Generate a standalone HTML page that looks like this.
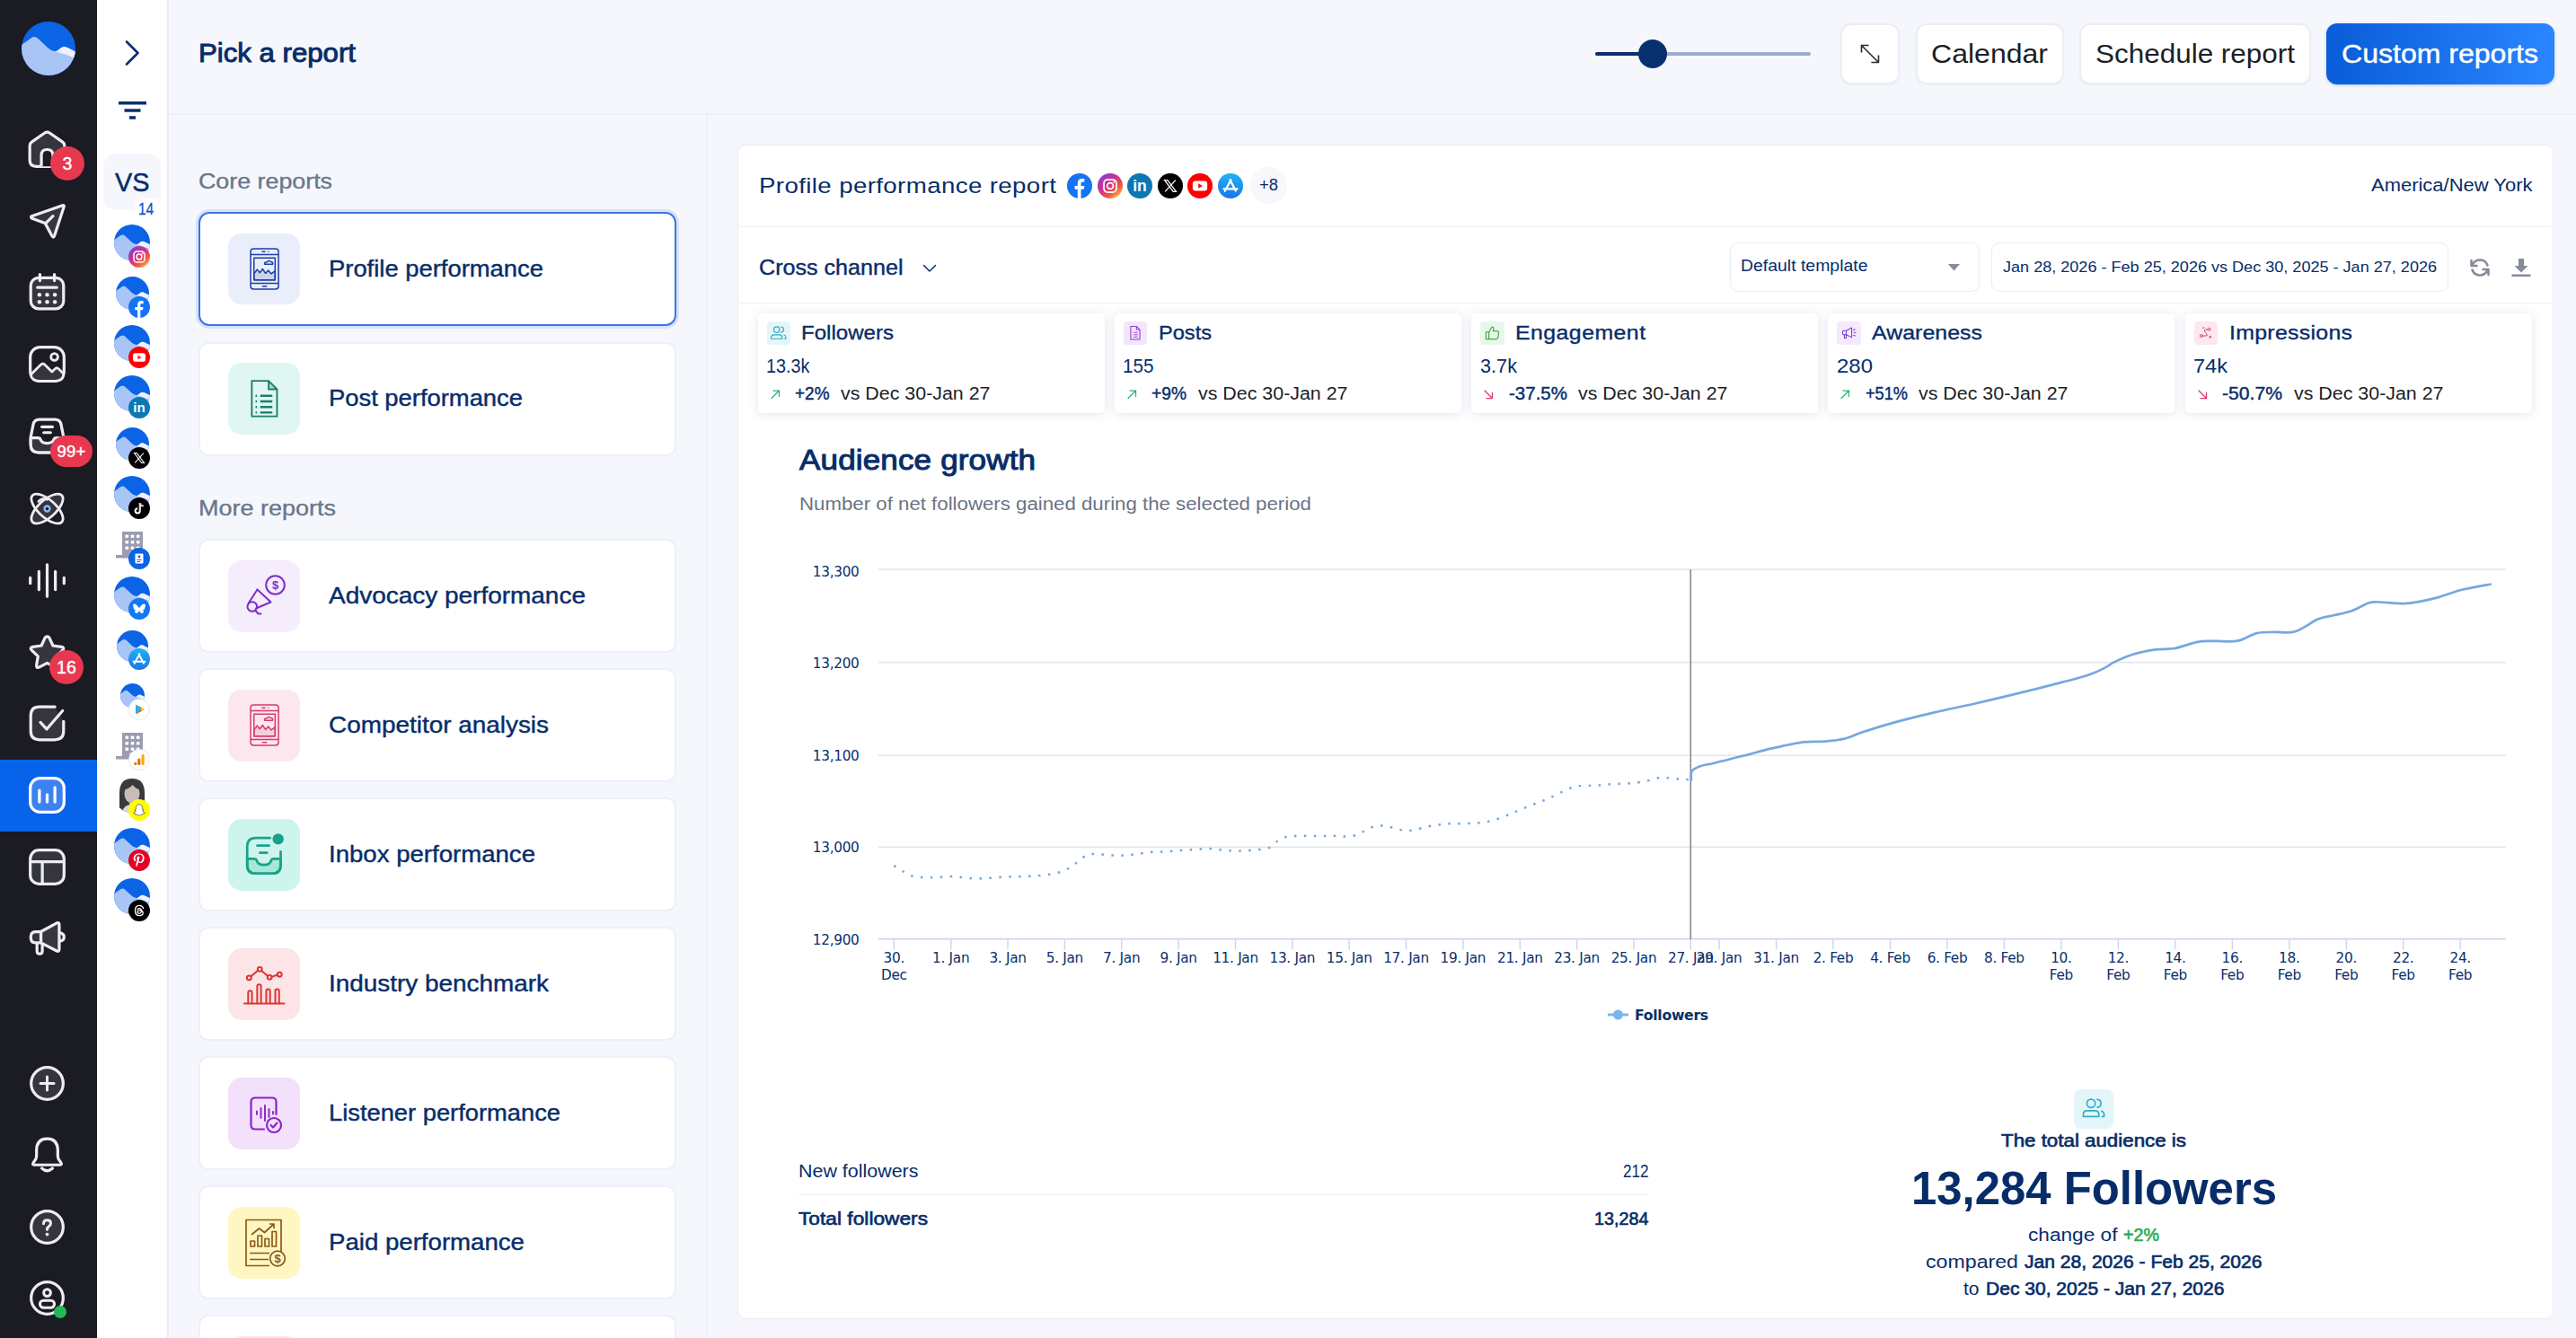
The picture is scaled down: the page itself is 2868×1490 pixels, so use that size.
<!DOCTYPE html>
<html lang="en"><head><meta charset="utf-8"><title>Reports</title><style>
*{box-sizing:border-box;margin:0;padding:0}
html,body{width:2868px;height:1490px;overflow:hidden;background:#f5f7fd;font-family:"Liberation Sans",sans-serif;}
body{position:relative}
@media (max-width:1500px){html{zoom:.5}}
.b{position:absolute;display:block}
.t{position:absolute;white-space:nowrap;display:block;transform-origin:0 50%}
</style></head>
<body>
<!-- nav -->
<div class="b" style="left:0.0px;top:0.0px;width:108.0px;height:1490.0px;background:#1a1b23"></div>
<svg class="b" style="left:24.0px;top:24.0px;" width="60" height="60" viewBox="0 0 60 60" fill="none"><clipPath id="lc0"><circle cx="30" cy="30" r="30"/></clipPath><g clip-path="url(#lc0)"><rect width="60" height="60" fill="#0b63e6"/><path d="M0 26 L10.500 18.500 Q14.500 15.500 18.500 19 L29 29 Q34 33.500 38 33 Q41 32 43.500 29.500 Q47.500 26.500 52 29.500 L60 33.500 V60 H0Z" fill="#a9c5f6"/><path d="M38 33.500 Q41 32.300 43.500 29.500 Q47.500 26.500 52 29.500 L60 33.500 V41 Q50 36.500 38 33.500Z" fill="#edf2fd"/></g></svg>
<div class="b" style="left:0.0px;top:846.0px;width:108.0px;height:80.0px;background:#0763ea"></div>
<svg class="b" style="left:30.5px;top:144.5px;" width="43" height="43" viewBox="0 0 40 40" fill="none"><path d="M2 16 Q2 13.500 4 12.200 L17.500 2.800 Q20 1.200 22.500 2.800 L36 12.200 Q38 13.500 38 16 V31 Q38 37.500 31.500 37.500 H8.500 Q2 37.500 2 31Z" fill="#34353f" stroke="#ececf1" stroke-width="3" stroke-linejoin="round"/><path d="M14 37.500 V26 Q14 20 20 20 Q26 20 26 26 V37.500" fill="#1a1b23" stroke="#ececf1" stroke-width="3"/></svg>
<svg class="b" style="left:30.5px;top:223.5px;" width="43" height="43" viewBox="0 0 40 40" fill="none"><path d="M4 15.5 L36 4.5 Q38 4 37.3 6 L27.5 36 Q26.5 38.5 25 36 L18.5 24 Q18 23 17 22.5 L4.5 18 Q2.5 16.5 4 15.5Z" fill="#34353f" stroke="#ececf1" stroke-width="3" stroke-linejoin="round"/><path d="M18.5 23 L26 15.5" stroke="#ececf1" stroke-width="3" stroke-linecap="round"/></svg>
<svg class="b" style="left:30.5px;top:303.5px;" width="43" height="43" viewBox="0 0 40 40" fill="none"><rect x="3" y="5" width="34" height="32" rx="8" fill="#34353f" stroke="#ececf1" stroke-width="3"/><path d="M12.5 1.5V8M27.5 1.5V8M10 15H30" stroke="#ececf1" stroke-width="3" stroke-linecap="round"/><g fill="#ececf1"><circle cx="12" cy="22.5" r="2.1"/><circle cx="20" cy="22.5" r="2.1"/><circle cx="28" cy="22.5" r="2.1"/><circle cx="12" cy="30" r="2.1"/><circle cx="20" cy="30" r="2.1"/><circle cx="28" cy="30" r="2.1"/></g></svg>
<svg class="b" style="left:30.5px;top:383.5px;" width="43" height="43" viewBox="0 0 40 40" fill="none"><rect x="2.5" y="2.5" width="35" height="35" rx="10" fill="#1a1b23" stroke="#ececf1" stroke-width="3"/><path d="M3 31 L13.5 20.5 Q15.5 18.5 17.5 20.5 L25 28 L28 25 Q30 23 32 25 L37 30 Q37 37.5 28 37.5 H12 Q4 37.5 3 31Z" fill="#34353f" stroke="#ececf1" stroke-width="2.6" stroke-linejoin="round"/><circle cx="27.5" cy="12.5" r="3.6" stroke="#ececf1" stroke-width="2.6"/></svg>
<svg class="b" style="left:30.5px;top:463.5px;" width="43" height="43" viewBox="0 0 40 40" fill="none"><path d="M12 3 H28 Q33.500 3 34.500 8.500 L37 21 V29 Q37 37 29 37 H11 Q3 37 3 29 V21 L5.500 8.500 Q6.500 3 12 3Z" fill="#1a1b23" stroke="#ececf1" stroke-width="3" stroke-linejoin="round"/><path d="M3 22 H10.500 Q12.500 22 13.200 24 Q14.500 27.500 20 27.500 Q25.500 27.500 26.800 24 Q27.500 22 29.500 22 H37 V29 Q37 37 29 37 H11 Q3 37 3 29Z" fill="#34353f" stroke="#ececf1" stroke-width="3" stroke-linejoin="round"/><path d="M14.500 10.500H25.500M16.500 16.500H23.500" stroke="#ececf1" stroke-width="3" stroke-linecap="round"/></svg>
<svg class="b" style="left:30.5px;top:544.5px;" width="43" height="43" viewBox="0 0 40 40" fill="none"><g stroke="#ececf1" stroke-width="2.600" fill="#34353f"><ellipse cx="20" cy="20" rx="9" ry="20.500" transform="rotate(48 20 20)"/><ellipse cx="20" cy="20" rx="9" ry="20.500" transform="rotate(-48 20 20)" fill="none"/></g><path d="M11 12.500Q15 8 20 10.500" stroke="#ececf1" stroke-width="2.400" stroke-linecap="round"/><circle cx="20" cy="20" r="2.800" fill="#1a1b23" stroke="#8fb4f5" stroke-width="2.200"/></svg>
<svg class="b" style="left:30.5px;top:624.5px;" width="43" height="43" viewBox="0 0 40 40" fill="none"><path d="M2.500 17V23M11.500 10.500V29.500M20 3.500V36.500M28.500 10.500V29.500M37.500 17V23" stroke="#ececf1" stroke-width="3" stroke-linecap="round"/></svg>
<svg class="b" style="left:30.5px;top:704.5px;" width="43" height="43" viewBox="0 0 40 40" fill="none"><path d="M20 3.500 Q21.500 3.500 22.300 5 L26 13 L34.800 14.300 Q38.500 15 36 17.800 L29.500 24 L31 33 Q31.500 36.800 28 35.200 L20 31 L12 35.200 Q8.500 36.800 9 33 L10.500 24 L4 17.800 Q1.500 15 5.200 14.300 L14 13 L17.700 5 Q18.500 3.500 20 3.500Z" fill="#34353f" stroke="#ececf1" stroke-width="3" stroke-linejoin="round"/></svg>
<svg class="b" style="left:30.5px;top:783.5px;" width="43" height="43" viewBox="0 0 40 40" fill="none"><path d="M37 18 V28 Q37 37 28 37 H12 Q3 37 3 28 V12 Q3 3 12 3 H28" fill="#34353f" stroke="#ececf1" stroke-width="3" stroke-linecap="round"/><path d="M13 19 L19.500 26 L36 7" stroke="#ececf1" stroke-width="3" stroke-linecap="round" stroke-linejoin="round"/></svg>
<svg class="b" style="left:30.5px;top:863.5px;" width="43" height="43" viewBox="0 0 40 40" fill="none"><rect x="2.500" y="2.500" width="35" height="35" rx="10" fill="#3d82f0" stroke="#ffffff" stroke-width="3"/><path d="M12 15V27M20 19.500V27M28 12V27" stroke="#fff" stroke-width="3" stroke-linecap="round"/></svg>
<svg class="b" style="left:30.5px;top:943.5px;" width="43" height="43" viewBox="0 0 40 40" fill="none"><rect x="2.500" y="2.500" width="35" height="35" rx="9" fill="#34353f" stroke="#ececf1" stroke-width="3"/><path d="M3 14.500H37M15 14.500V37" stroke="#ececf1" stroke-width="3"/></svg>
<svg class="b" style="left:30.5px;top:1022.5px;" width="43" height="43" viewBox="0 0 40 40" fill="none"><path d="M13.500 13.500 L30 4.500 Q32.500 3.500 32.500 6.500 V31.500 Q32.500 34.500 30 33.500 L13.500 25Z" fill="#34353f" stroke="#ececf1" stroke-width="3" stroke-linejoin="round"/><path d="M13.500 13.500 H8 Q3 13.500 3 19.200 Q3 25 8 25 H13.500Z" fill="#34353f" stroke="#ececf1" stroke-width="3" stroke-linejoin="round"/><path d="M9.500 25.500 V33.500 Q9.500 36.500 12.300 36.500 Q15 36.500 15 33.500 V26" stroke="#ececf1" stroke-width="3"/><path d="M33 14.500 Q37.500 15.500 37.500 19 Q37.500 22.500 33 23.500" stroke="#ececf1" stroke-width="3" stroke-linecap="round"/></svg>
<svg class="b" style="left:30.5px;top:1184.5px;" width="43" height="43" viewBox="0 0 40 40" fill="none"><circle cx="20" cy="20" r="16.600" fill="#34353f" stroke="#ececf1" stroke-width="3"/><path d="M20 13V27M13 20H27" stroke="#ececf1" stroke-width="2.800" stroke-linecap="round"/></svg>
<svg class="b" style="left:30.5px;top:1264.5px;" width="43" height="43" viewBox="0 0 40 40" fill="none"><path d="M20 3 Q31 3 31 15 V21 Q31 24 33.500 26.500 Q36.500 30 32.500 30 H7.500 Q3.500 30 6.500 26.500 Q9 24 9 21 V15 Q9 3 20 3Z" stroke="#ececf1" stroke-width="3" stroke-linejoin="round"/><path d="M14.500 33.500 Q20 38.500 25.500 33.500" stroke="#ececf1" stroke-width="3" stroke-linecap="round"/></svg>
<svg class="b" style="left:30.5px;top:1344.5px;" width="43" height="43" viewBox="0 0 40 40" fill="none"><circle cx="20" cy="20" r="16.600" fill="#34353f" stroke="#ececf1" stroke-width="3"/><path d="M16.300 16.500 Q16.300 12.800 20 12.800 Q23.700 12.800 23.700 16 Q23.700 18 21.700 19.300 Q20 20.500 20 22.500" stroke="#ececf1" stroke-width="2.800" stroke-linecap="round"/><circle cx="20" cy="27.500" r="1.800" fill="#ececf1"/></svg>
<svg class="b" style="left:30.5px;top:1423.5px;" width="43" height="43" viewBox="0 0 40 40" fill="none"><circle cx="20" cy="20" r="16.600" stroke="#ececf1" stroke-width="3"/><circle cx="20" cy="14.500" r="3.600" stroke="#ececf1" stroke-width="2.800"/><rect x="12.500" y="22.500" width="15" height="7.500" rx="3.700" stroke="#ececf1" stroke-width="2.800"/></svg>
<div class="b" style="left:56.0px;top:163.0px;width:38px;height:38px;border-radius:19px;background:#e8384f;color:#fff;font-size:19.5px;line-height:38px;text-align:center;font-weight:400;-webkit-text-stroke:.4px #fff;letter-spacing:.2px">3</div>
<div class="b" style="left:56.0px;top:485.0px;width:47px;height:35px;border-radius:19px;background:#e8384f;color:#fff;font-size:18.5px;line-height:35px;text-align:center;font-weight:400;-webkit-text-stroke:.4px #fff;letter-spacing:.2px">99+</div>
<div class="b" style="left:55.0px;top:724.0px;width:38px;height:38px;border-radius:19px;background:#e8384f;color:#fff;font-size:19.5px;line-height:38px;text-align:center;font-weight:400;-webkit-text-stroke:.4px #fff;letter-spacing:.2px">16</div>
<div class="b" style="left:60.0px;top:1454.0px;width:14.0px;height:14.0px;border-radius:50%;background:#22b85a"></div>
<!-- profiles -->
<div class="b" style="left:108.0px;top:0.0px;width:78.0px;height:1490.0px;background:#fff"></div>
<div class="b" style="left:186.0px;top:0.0px;width:1.5px;height:1490.0px;background:#e8ebf8"></div>
<div class="b" style="left:187.5px;top:0.0px;width:2.5px;height:1490.0px;background:#f9fbff"></div>
<svg class="b" style="left:138.0px;top:44.0px;" width="20" height="30" viewBox="0 0 20 30" fill="none"><path d="M3 2.500L15.500 15L3 27.500" stroke="#0a2f6b" stroke-width="2.600" stroke-linecap="round" stroke-linejoin="round"/></svg>
<svg class="b" style="left:132.0px;top:113.0px;" width="31" height="20" viewBox="0 0 31 20" fill="none"><path d="M0 1.800H31M6.500 10H24.500M12 18H19" stroke="#0a2f6b" stroke-width="3.600"/></svg>
<div class="b" style="left:115.0px;top:171.0px;width:64.0px;height:63.0px;background:#f5f7fd;border-radius:14px"></div>
<span class="t" style="left:127.8px;top:187px;font-size:29.00px;line-height:32px;color:#072d69;transform:scaleX(0.9952);-webkit-text-stroke:0.50px #072d69;">VS</span>
<div class="b" style="left:150.0px;top:221.0px;width:26.0px;height:24.0px;background:#fff;border-radius:10px 0 0 10px"></div>
<span class="t" style="left:154.0px;top:223px;font-size:18.00px;line-height:20px;color:#0b57d0;letter-spacing:-0.26px;transform:scaleX(0.8600);-webkit-text-stroke:0.30px #0b57d0;">14</span>
<svg class="b" style="left:127.0px;top:250.0px;" width="40" height="40" viewBox="0 0 60 60" fill="none"><clipPath id="lcp0"><circle cx="30" cy="30" r="30"/></clipPath><g clip-path="url(#lcp0)"><rect width="60" height="60" fill="#0b63e6"/><path d="M0 26 L10.500 18.500 Q14.500 15.500 18.500 19 L29 29 Q34 33.500 38 33 Q41 32 43.500 29.500 Q47.500 26.500 52 29.500 L60 33.500 V60 H0Z" fill="#a9c5f6"/><path d="M38 33.500 Q41 32.300 43.500 29.500 Q47.500 26.500 52 29.500 L60 33.500 V41 Q50 36.500 38 33.500Z" fill="#edf2fd"/></g></svg>
<svg class="b" style="left:143.0px;top:274.0px;" width="24" height="24" viewBox="0 0 24 24" fill="none"><defs><linearGradient id="igg" x1="0.12" y1="0.1" x2="0.85" y2="0.95"><stop offset="0" stop-color="#8a3ccb"/><stop offset=".42" stop-color="#d4308a"/><stop offset=".72" stop-color="#f0583c"/><stop offset="1" stop-color="#fdbb4c"/></linearGradient></defs><circle cx="12" cy="12" r="12" fill="url(#igg)"/><rect x="6" y="6" width="12" height="12" rx="3.600" stroke="#fff" stroke-width="1.500"/><circle cx="12" cy="12" r="2.900" stroke="#fff" stroke-width="1.500"/><circle cx="15.600" cy="8.400" r=".9" fill="#fff"/></svg>
<svg class="b" style="left:128.5px;top:308.2px;" width="37" height="37" viewBox="0 0 60 60" fill="none"><clipPath id="lcp1"><circle cx="30" cy="30" r="30"/></clipPath><g clip-path="url(#lcp1)"><rect width="60" height="60" fill="#0b63e6"/><path d="M0 26 L10.500 18.500 Q14.500 15.500 18.500 19 L29 29 Q34 33.500 38 33 Q41 32 43.500 29.500 Q47.500 26.500 52 29.500 L60 33.500 V60 H0Z" fill="#a9c5f6"/><path d="M38 33.500 Q41 32.300 43.500 29.500 Q47.500 26.500 52 29.500 L60 33.500 V41 Q50 36.500 38 33.500Z" fill="#edf2fd"/></g></svg>
<svg class="b" style="left:143.0px;top:330.0px;" width="24" height="24" viewBox="0 0 24 24" fill="none"><circle cx="12" cy="12" r="12" fill="#1474f5"/><path d="M13.300 24V15.300H16l.5-3.300h-3.200V9.900c0-1 .4-1.700 1.800-1.700h1.500V5.300c-.3 0-1.300-.2-2.400-.2-2.500 0-4.100 1.500-4.100 4.200V12H7.300v3.300h2.800V24Z" fill="#fff"/></svg>
<svg class="b" style="left:127.0px;top:362.0px;" width="40" height="40" viewBox="0 0 60 60" fill="none"><clipPath id="lcp2"><circle cx="30" cy="30" r="30"/></clipPath><g clip-path="url(#lcp2)"><rect width="60" height="60" fill="#0b63e6"/><path d="M0 26 L10.500 18.500 Q14.500 15.500 18.500 19 L29 29 Q34 33.500 38 33 Q41 32 43.500 29.500 Q47.500 26.500 52 29.500 L60 33.500 V60 H0Z" fill="#a9c5f6"/><path d="M38 33.500 Q41 32.300 43.500 29.500 Q47.500 26.500 52 29.500 L60 33.500 V41 Q50 36.500 38 33.500Z" fill="#edf2fd"/></g></svg>
<svg class="b" style="left:143.0px;top:386.0px;" width="24" height="24" viewBox="0 0 24 24" fill="none"><circle cx="12" cy="12" r="12" fill="#ff0000"/><rect x="5" y="7.300" width="14" height="9.400" rx="2.800" fill="#fff"/><path d="M10.500 9.700V14.300L14.500 12Z" fill="#ff0000"/></svg>
<svg class="b" style="left:127.0px;top:418.0px;" width="40" height="40" viewBox="0 0 60 60" fill="none"><clipPath id="lcp3"><circle cx="30" cy="30" r="30"/></clipPath><g clip-path="url(#lcp3)"><rect width="60" height="60" fill="#0b63e6"/><path d="M0 26 L10.500 18.500 Q14.500 15.500 18.500 19 L29 29 Q34 33.500 38 33 Q41 32 43.500 29.500 Q47.500 26.500 52 29.500 L60 33.500 V60 H0Z" fill="#a9c5f6"/><path d="M38 33.500 Q41 32.300 43.500 29.500 Q47.500 26.500 52 29.500 L60 33.500 V41 Q50 36.500 38 33.500Z" fill="#edf2fd"/></g></svg>
<svg class="b" style="left:143.0px;top:442.0px;" width="24" height="24" viewBox="0 0 24 24" fill="none"><circle cx="12" cy="12" r="12" fill="#0a78b5"/><text x="12" y="17" font-size="15" font-weight="700" fill="#fff" text-anchor="middle" font-family="Liberation Sans,sans-serif">in</text></svg>
<svg class="b" style="left:128.5px;top:476.2px;" width="37" height="37" viewBox="0 0 60 60" fill="none"><clipPath id="lcp4"><circle cx="30" cy="30" r="30"/></clipPath><g clip-path="url(#lcp4)"><rect width="60" height="60" fill="#0b63e6"/><path d="M0 26 L10.500 18.500 Q14.500 15.500 18.500 19 L29 29 Q34 33.500 38 33 Q41 32 43.500 29.500 Q47.500 26.500 52 29.500 L60 33.500 V60 H0Z" fill="#a9c5f6"/><path d="M38 33.500 Q41 32.300 43.500 29.500 Q47.500 26.500 52 29.500 L60 33.500 V41 Q50 36.500 38 33.500Z" fill="#edf2fd"/></g></svg>
<svg class="b" style="left:143.0px;top:498.0px;" width="24" height="24" viewBox="0 0 24 24" fill="none"><circle cx="12" cy="12" r="12" fill="#000"/><path d="M6.500 6.500H9.300L17.500 17.500H14.700Z" stroke="#fff" stroke-width="1.100"/><path d="M17 6.500L7 17.500" stroke="#fff" stroke-width="1.100"/></svg>
<svg class="b" style="left:127.0px;top:530.0px;" width="40" height="40" viewBox="0 0 60 60" fill="none"><clipPath id="lcp5"><circle cx="30" cy="30" r="30"/></clipPath><g clip-path="url(#lcp5)"><rect width="60" height="60" fill="#0b63e6"/><path d="M0 26 L10.500 18.500 Q14.500 15.500 18.500 19 L29 29 Q34 33.500 38 33 Q41 32 43.500 29.500 Q47.500 26.500 52 29.500 L60 33.500 V60 H0Z" fill="#a9c5f6"/><path d="M38 33.500 Q41 32.300 43.500 29.500 Q47.500 26.500 52 29.500 L60 33.500 V41 Q50 36.500 38 33.500Z" fill="#edf2fd"/></g></svg>
<svg class="b" style="left:143.0px;top:554.0px;" width="24" height="24" viewBox="0 0 24 24" fill="none"><circle cx="12" cy="12" r="12" fill="#000"/><path d="M12.800 6V14.800A2.600 2.600 0 1 1 10.200 12.200" stroke="#fff" stroke-width="2" /><path d="M12.800 6.300Q13.300 9.300 16.800 9.600" stroke="#fff" stroke-width="2"/><path d="M12.300 6V14.800" stroke="#25f4ee" stroke-width=".7" /><path d="M13.500 6.300Q14 9.300 17 9.900" stroke="#fe2c55" stroke-width=".7"/></svg>
<svg class="b" style="left:129.0px;top:592.0px;" width="30" height="30" viewBox="0 0 30 30" fill="none"><rect x="7" y="0" width="23" height="27.500" fill="#9b9cb1"/><rect x="0" y="26" width="30" height="3.500" fill="#9b9cb1"/><rect x="10.5" y="3.5" width="3.600" height="3.600" rx=".8" fill="#fff"/><rect x="16.7" y="3.5" width="3.600" height="3.600" rx=".8" fill="#fff"/><rect x="22.9" y="3.5" width="3.600" height="3.600" rx=".8" fill="#fff"/><rect x="10.5" y="10.0" width="3.600" height="3.600" rx=".8" fill="#fff"/><rect x="16.7" y="10.0" width="3.600" height="3.600" rx=".8" fill="#fff"/><rect x="22.9" y="10.0" width="3.600" height="3.600" rx=".8" fill="#fff"/><rect x="10.5" y="16.5" width="3.600" height="3.600" rx=".8" fill="#fff"/><rect x="16.7" y="16.5" width="3.600" height="3.600" rx=".8" fill="#fff"/><rect x="22.9" y="16.5" width="3.600" height="3.600" rx=".8" fill="#fff"/><rect x="15.500" y="22.500" width="5" height="5" fill="#fff"/></svg>
<svg class="b" style="left:143.0px;top:610.0px;" width="24" height="24" viewBox="0 0 24 24" fill="none"><circle cx="12" cy="12" r="12" fill="#0b63e6"/><rect x="7.500" y="6.500" width="9" height="11" rx="1" fill="#fff"/><circle cx="12" cy="10" r="1.400" fill="#0b63e6"/><path d="M9.500 13.500H14.500M9.500 15.500H13" stroke="#0b63e6" stroke-width="1"/></svg>
<svg class="b" style="left:127.0px;top:642.0px;" width="40" height="40" viewBox="0 0 60 60" fill="none"><clipPath id="lcp7"><circle cx="30" cy="30" r="30"/></clipPath><g clip-path="url(#lcp7)"><rect width="60" height="60" fill="#0b63e6"/><path d="M0 26 L10.500 18.500 Q14.500 15.500 18.500 19 L29 29 Q34 33.500 38 33 Q41 32 43.500 29.500 Q47.500 26.500 52 29.500 L60 33.500 V60 H0Z" fill="#a9c5f6"/><path d="M38 33.500 Q41 32.300 43.500 29.500 Q47.500 26.500 52 29.500 L60 33.500 V41 Q50 36.500 38 33.500Z" fill="#edf2fd"/></g></svg>
<svg class="b" style="left:143.0px;top:666.0px;" width="24" height="24" viewBox="0 0 24 24" fill="none"><circle cx="12" cy="12" r="12" fill="#1178f2"/><path d="M12 11.300C11 9.300 8.500 6.800 6.800 6.500 5.500 6.300 5 7 5.200 8.600c.1 1 .5 3.200 1 3.800.6.800 1.700 1 2.900.9-2 .4-2.700 1.500-1.700 2.800 1.600 2 3.300.800 4.600-2.100 1.300 2.900 3 4.100 4.600 2.100 1-1.300.3-2.400-1.700-2.800 1.200.1 2.300-.1 2.900-.9.500-.6.900-2.800 1-3.800.2-1.600-.3-2.300-1.600-2.100-1.700.3-4.200 2.800-5.200 4.800Z" fill="#fff"/></svg>
<svg class="b" style="left:129.5px;top:701.8px;" width="35" height="35" viewBox="0 0 60 60" fill="none"><clipPath id="lcp8"><circle cx="30" cy="30" r="30"/></clipPath><g clip-path="url(#lcp8)"><rect width="60" height="60" fill="#0b63e6"/><path d="M0 26 L10.500 18.500 Q14.500 15.500 18.500 19 L29 29 Q34 33.500 38 33 Q41 32 43.500 29.500 Q47.500 26.500 52 29.500 L60 33.500 V60 H0Z" fill="#a9c5f6"/><path d="M38 33.500 Q41 32.300 43.500 29.500 Q47.500 26.500 52 29.500 L60 33.500 V41 Q50 36.500 38 33.500Z" fill="#edf2fd"/></g></svg>
<svg class="b" style="left:143.0px;top:722.0px;" width="24" height="24" viewBox="0 0 24 24" fill="none"><defs><linearGradient id="asg" x1="0" y1="0" x2="0" y2="1"><stop offset="0" stop-color="#1fb3f5"/><stop offset="1" stop-color="#1a74ec"/></linearGradient></defs><circle cx="12" cy="12" r="12" fill="url(#asg)"/><path d="M12.500 6.300L7.600 15M11.500 6.300L17 16.800M5.500 14.800H18.500M7.600 15L6.600 17" stroke="#fff" stroke-width="1.900" stroke-linecap="round"/></svg>
<svg class="b" style="left:134.3px;top:760.5px;" width="27" height="27" viewBox="0 0 60 60" fill="none"><clipPath id="lcp9"><circle cx="30" cy="30" r="30"/></clipPath><g clip-path="url(#lcp9)"><rect width="60" height="60" fill="#0b63e6"/><path d="M0 26 L10.500 18.500 Q14.500 15.500 18.500 19 L29 29 Q34 33.500 38 33 Q41 32 43.500 29.500 Q47.500 26.500 52 29.500 L60 33.500 V60 H0Z" fill="#a9c5f6"/><path d="M38 33.500 Q41 32.300 43.500 29.500 Q47.500 26.500 52 29.500 L60 33.500 V41 Q50 36.500 38 33.500Z" fill="#edf2fd"/></g></svg>
<svg class="b" style="left:143.0px;top:778.0px;" width="24" height="24" viewBox="0 0 24 24" fill="none"><circle cx="12" cy="12" r="11.500" fill="#fff" stroke="#e3e6ee" stroke-width="1"/><path d="M8 6.500L13.300 12L8 17.500Z" fill="#2da8f0"/><path d="M8 6.500L15 10.300L13.300 12Z" fill="#34a853"/><path d="M8 17.500L15 13.700L13.300 12Z" fill="#ea4335"/><path d="M15 10.300L18 12L15 13.700L13.300 12Z" fill="#fbbc04"/></svg>
<svg class="b" style="left:129.0px;top:816.0px;" width="30" height="30" viewBox="0 0 30 30" fill="none"><rect x="7" y="0" width="23" height="27.500" fill="#9b9cb1"/><rect x="0" y="26" width="30" height="3.500" fill="#9b9cb1"/><rect x="10.5" y="3.5" width="3.600" height="3.600" rx=".8" fill="#fff"/><rect x="16.7" y="3.5" width="3.600" height="3.600" rx=".8" fill="#fff"/><rect x="22.9" y="3.5" width="3.600" height="3.600" rx=".8" fill="#fff"/><rect x="10.5" y="10.0" width="3.600" height="3.600" rx=".8" fill="#fff"/><rect x="16.7" y="10.0" width="3.600" height="3.600" rx=".8" fill="#fff"/><rect x="22.9" y="10.0" width="3.600" height="3.600" rx=".8" fill="#fff"/><rect x="10.5" y="16.5" width="3.600" height="3.600" rx=".8" fill="#fff"/><rect x="16.7" y="16.5" width="3.600" height="3.600" rx=".8" fill="#fff"/><rect x="22.9" y="16.5" width="3.600" height="3.600" rx=".8" fill="#fff"/><rect x="15.500" y="22.500" width="5" height="5" fill="#fff"/></svg>
<svg class="b" style="left:143.0px;top:834.0px;" width="24" height="24" viewBox="0 0 24 24" fill="none"><circle cx="12" cy="12" r="11.500" fill="#fff" stroke="#e3e6ee" stroke-width="1"/><rect x="14.500" y="6" width="3.200" height="12" rx="1.600" fill="#f9ab00"/><rect x="10.200" y="10.500" width="3.200" height="7.500" rx="1.600" fill="#e37400"/><circle cx="7.800" cy="16.400" r="1.600" fill="#e37400"/></svg>
<svg class="b" style="left:127.0px;top:865.0px;" width="40" height="40" viewBox="0 0 40 40" fill="none"><clipPath id="wc"><circle cx="20" cy="20" r="20"/></clipPath><g clip-path="url(#wc)"><rect width="40" height="40" fill="#fff"/><path d="M6 40V18Q6 2 20 2Q34 2 34 18V40Z" fill="#3a3a3c"/><ellipse cx="20" cy="19" rx="8.500" ry="10.500" fill="#c9bcb7"/><path d="M10 15Q12 6 20 6Q29 6 30.500 15Q24 13.500 20.500 9Q17 13.500 10 15Z" fill="#3a3a3c"/><path d="M9 40Q10 31 20 31Q30 31 31 40Z" fill="#d8d8d8"/><rect x="17" y="27" width="6" height="6" fill="#bfb2ad"/></g></svg>
<svg class="b" style="left:143.0px;top:890.0px;" width="24" height="24" viewBox="0 0 24 24" fill="none"><circle cx="12" cy="12" r="12" fill="#fffc00"/><path d="M12 5.800c2.300 0 3.600 1.700 3.600 3.700v1.600l1.300.5-.1.700-1.100.5c.4 1.200 1.300 2 2.500 2.400l-.2.700-1.500.3-.3.800-1.500-.1c-.8.600-1.500 1.300-2.700 1.300s-1.900-.7-2.700-1.300l-1.500.1-.3-.8-1.500-.3-.2-.7c1.200-.4 2.100-1.200 2.500-2.400l-1.100-.5-.1-.7 1.300-.5V9.500c0-2 1.300-3.700 3.600-3.700Z" fill="#fff" stroke="#222" stroke-width=".6"/></svg>
<svg class="b" style="left:127.0px;top:922.0px;" width="40" height="40" viewBox="0 0 60 60" fill="none"><clipPath id="lcp12"><circle cx="30" cy="30" r="30"/></clipPath><g clip-path="url(#lcp12)"><rect width="60" height="60" fill="#0b63e6"/><path d="M0 26 L10.500 18.500 Q14.500 15.500 18.500 19 L29 29 Q34 33.500 38 33 Q41 32 43.500 29.500 Q47.500 26.500 52 29.500 L60 33.500 V60 H0Z" fill="#a9c5f6"/><path d="M38 33.500 Q41 32.300 43.500 29.500 Q47.500 26.500 52 29.500 L60 33.500 V41 Q50 36.500 38 33.500Z" fill="#edf2fd"/></g></svg>
<svg class="b" style="left:143.0px;top:946.0px;" width="24" height="24" viewBox="0 0 24 24" fill="none"><circle cx="12" cy="12" r="12" fill="#e60023"/><path transform="translate(-1.8 -1.8) scale(1.15)" d="M12.200 5.200c-3.800 0-5.700 2.700-5.700 4.900 0 1.400.5 2.600 1.600 3 .2.100.3 0 .4-.2l.2-.6c0-.2 0-.300-.1-.5-.3-.4-.5-.9-.5-1.600 0-2 1.500-3.800 3.900-3.800 2.100 0 3.300 1.300 3.300 3 0 2.300-1 4.200-2.500 4.200-.8 0-1.400-.7-1.200-1.500.2-1 .7-2.100.7-2.800 0-.6-.3-1.200-1.100-1.200-.8 0-1.500.9-1.500 2 0 .7.300 1.200.3 1.200l-1 4.200c-.3 1.200 0 2.800 0 2.900 0 .1.100.1.200 0 .1-.1 1-1.300 1.400-2.500l.5-2.100c.3.500 1 .9 1.800.9 2.400 0 4-2.200 4-5.100 0-2.200-1.900-4.200-4.700-4.200Z" fill="#fff"/></svg>
<svg class="b" style="left:127.0px;top:978.0px;" width="40" height="40" viewBox="0 0 60 60" fill="none"><clipPath id="lcp13"><circle cx="30" cy="30" r="30"/></clipPath><g clip-path="url(#lcp13)"><rect width="60" height="60" fill="#0b63e6"/><path d="M0 26 L10.500 18.500 Q14.500 15.500 18.500 19 L29 29 Q34 33.500 38 33 Q41 32 43.500 29.500 Q47.500 26.500 52 29.500 L60 33.500 V60 H0Z" fill="#a9c5f6"/><path d="M38 33.500 Q41 32.300 43.500 29.500 Q47.500 26.500 52 29.500 L60 33.500 V41 Q50 36.500 38 33.500Z" fill="#edf2fd"/></g></svg>
<svg class="b" style="left:143.0px;top:1002.0px;" width="24" height="24" viewBox="0 0 24 24" fill="none"><circle cx="12" cy="12" r="12" fill="#000"/><path d="M16.500 9.500C16 7.500 14.500 6.300 12.200 6.300 9.300 6.300 7.500 8.400 7.500 12s1.800 5.700 4.700 5.700c2.400 0 4-1.300 4-3.100 0-1.800-1.500-2.800-3.600-2.800-1.600 0-2.600.7-2.600 1.800 0 1 .8 1.600 1.900 1.600 1.600 0 2.600-1.100 2.500-3.200-.1-1.500-.9-2.400-2.400-2.400-.9 0-1.600.4-2 1" stroke="#fff" stroke-width="1.300" stroke-linecap="round" fill="none"/></svg>
<!-- topbar -->
<div class="b" style="left:188.0px;top:126.0px;width:2680.0px;height:2.0px;background:#eef1fb"></div>
<span class="t" style="left:220.5px;top:43px;font-size:29.00px;line-height:32px;color:#072d69;transform:scaleX(1.0750);-webkit-text-stroke:0.93px #072d69;">Pick a report</span>
<div class="b" style="left:1776.0px;top:57.5px;width:240.0px;height:4.0px;background:#9eabcf;border-radius:2px"></div>
<div class="b" style="left:1776.0px;top:57.5px;width:64.0px;height:4.0px;background:#08306e;border-radius:2px"></div>
<div class="b" style="left:1824.0px;top:43.5px;width:32.0px;height:32.0px;background:#08306e;border-radius:50%"></div>
<div class="b" style="left:2049.0px;top:26.0px;width:66.0px;height:68.0px;background:#fff;border:2px solid #ebeef6;border-radius:12px;box-shadow:0 1px 2px rgba(60,80,140,.05)"></div>
<svg class="b" style="left:2070.0px;top:48.0px;" width="24" height="24" viewBox="0 0 24 24" fill="none"><path d="M2.500 2.500L21.500 21.500M2.500 10V2.500H10M21.500 14V21.500H14" stroke="#2a2d36" stroke-width="1.600" stroke-linecap="round" stroke-linejoin="round"/></svg>
<div class="b" style="left:2133.0px;top:26.0px;width:165.0px;height:68.0px;background:#fff;border:2px solid #ebeef6;border-radius:12px;box-shadow:0 1px 2px rgba(60,80,140,.05)"></div><span class="t" style="left:2150.0px;top:43px;font-size:29.50px;line-height:33px;color:#1c1e26;transform:scaleX(1.0859);">Calendar</span>
<div class="b" style="left:2315.0px;top:26.0px;width:258.0px;height:68.0px;background:#fff;border:2px solid #ebeef6;border-radius:12px;box-shadow:0 1px 2px rgba(60,80,140,.05)"></div><span class="t" style="left:2333.0px;top:43px;font-size:29.50px;line-height:33px;color:#1c1e26;transform:scaleX(1.0659);">Schedule report</span>
<div class="b" style="left:2590.0px;top:26.0px;width:254.0px;height:68.0px;background:linear-gradient(90deg,#0a5cd8,#2a86ff);border-radius:12px;box-shadow:0 1px 3px rgba(10,80,200,.3)"></div><span class="t" style="left:2607.0px;top:43px;font-size:29.50px;line-height:33px;color:#fff;transform:scaleX(1.0861);-webkit-text-stroke:0.45px #fff;">Custom reports</span>
<!-- reports -->
<div class="b" style="left:786.0px;top:128.0px;width:2.0px;height:1362.0px;background:#eef1fb"></div>
<span class="t" style="left:220.5px;top:188px;font-size:24.50px;line-height:27px;color:#6a768a;transform:scaleX(1.0943);-webkit-text-stroke:0.35px #6a768a;">Core reports</span>
<div class="b" style="left:221.0px;top:236.0px;width:532.0px;height:127.0px;background:#fff;border:2.500px solid #3b76e3;border-radius:12px;box-shadow:0 0 0 3px #d6e2fb"></div><div class="b" style="left:254.3px;top:259.7px;width:79.5px;height:79.5px;background:#eaeefb;border-radius:15px"></div><svg class="b" style="left:270.5px;top:276.0px;overflow:visible" width="47.08" height="47.08" viewBox="0 0 44 44" fill="none"><g stroke="#1d3fa8" stroke-width="1.400" fill="none" stroke-linejoin="round"><rect x="7.500" y="1" width="29" height="42" rx="3"/><path d="M7.500 7H36.500M7.500 37H36.500M19 4H23M25.500 4H26.500M19.500 40H24.500"/><rect x="11" y="10.500" width="22" height="23"/><path d="M11 27L14.500 22.500L17 26L20 22L23 26.500L26 23.500L29 27L33 24V33.500H11Z" fill="#1d3fa8" fill-opacity=".15"/><path d="M22 16.500Q22 14.500 24.500 15Q26 12.500 28.500 14.500Q31 14.500 30.500 17H22.500Q22 17 22 16.500Z"/></g></svg><span class="t" style="left:366.0px;top:285px;font-size:25.30px;line-height:28px;color:#072d69;transform:scaleX(1.0825);-webkit-text-stroke:0.40px #072d69;">Profile performance</span>
<div class="b" style="left:221.0px;top:380.5px;width:532.0px;height:127.0px;background:#fff;border:2px solid #ecf0fa;border-radius:11px"></div><div class="b" style="left:254.3px;top:404.2px;width:79.5px;height:79.5px;background:#dff6f2;border-radius:15px"></div><svg class="b" style="left:271.1px;top:421.1px;overflow:visible" width="45.76" height="45.76" viewBox="0 0 44 44" fill="none"><g stroke="#1c7d6c" stroke-width="1.800" fill="none" stroke-linejoin="round"><path d="M9 3H27L36 12V41H9Z"/><path d="M27 3V12H36" fill="#1c7d6c" fill-opacity=".25"/><path d="M18 19H31M18 25H31M18 31H31M18 37H31" stroke-width="2.200"/><path d="M13 19H14.500M13 25H14.500M13 31H14.500M13 37H14.500" stroke-width="2.200"/></g></svg><span class="t" style="left:366.0px;top:429px;font-size:25.30px;line-height:28px;color:#072d69;transform:scaleX(1.0817);-webkit-text-stroke:0.40px #072d69;">Post performance</span>
<span class="t" style="left:220.5px;top:552px;font-size:24.50px;line-height:27px;color:#6a768a;transform:scaleX(1.1016);-webkit-text-stroke:0.35px #6a768a;">More reports</span>
<div class="b" style="left:221.0px;top:600.3px;width:532.0px;height:127.0px;background:#fff;border:2px solid #ecf0fa;border-radius:11px"></div><div class="b" style="left:254.3px;top:624.0px;width:79.5px;height:79.5px;background:#f5ecfc;border-radius:15px"></div><svg class="b" style="left:272.0px;top:641.8px;overflow:visible" width="44" height="44" viewBox="0 0 44 44" fill="none"><g stroke="#7b2fc9" stroke-width="2" fill="none" stroke-linejoin="round" stroke-linecap="round"><circle cx="34.500" cy="9.500" r="10.300"/><path d="M14.500 14.500L29.500 28.500L13 35.500"/><path d="M14.500 14.500L4.800 29.500"/><circle cx="8.800" cy="33.500" r="5.300"/><path d="M13 38.500L15.500 41.500H18.500"/></g><text x="34.500" y="14.300" font-size="13" font-weight="700" fill="#7b2fc9" text-anchor="middle" font-family="Liberation Sans,sans-serif">$</text></svg><span class="t" style="left:366.0px;top:649px;font-size:25.30px;line-height:28px;color:#072d69;transform:scaleX(1.1053);-webkit-text-stroke:0.40px #072d69;">Advocacy performance</span>
<div class="b" style="left:221.0px;top:744.3px;width:532.0px;height:127.0px;background:#fff;border:2px solid #ecf0fa;border-radius:11px"></div><div class="b" style="left:254.3px;top:768.0px;width:79.5px;height:79.5px;background:#fde7ef;border-radius:15px"></div><svg class="b" style="left:270.5px;top:784.3px;overflow:visible" width="47.08" height="47.08" viewBox="0 0 44 44" fill="none"><g stroke="#d63a6a" stroke-width="1.400" fill="none" stroke-linejoin="round"><rect x="7.500" y="1" width="29" height="42" rx="3"/><path d="M7.500 7H36.500M7.500 37H36.500M19 4H23M25.500 4H26.500M19.500 40H24.500"/><rect x="11" y="10.500" width="22" height="23"/><path d="M11 27L14.500 22.500L17 26L20 22L23 26.500L26 23.500L29 27L33 24V33.500H11Z" fill="#d63a6a" fill-opacity=".15"/><path d="M22 16.500Q22 14.500 24.500 15Q26 12.500 28.500 14.500Q31 14.500 30.500 17H22.500Q22 17 22 16.500Z"/></g></svg><span class="t" style="left:366.0px;top:793px;font-size:25.30px;line-height:28px;color:#072d69;transform:scaleX(1.1028);-webkit-text-stroke:0.40px #072d69;">Competitor analysis</span>
<div class="b" style="left:221.0px;top:888.3px;width:532.0px;height:127.0px;background:#fff;border:2px solid #ecf0fa;border-radius:11px"></div><div class="b" style="left:254.3px;top:912.0px;width:79.5px;height:79.5px;background:#cdf5ee;border-radius:15px"></div><svg class="b" style="left:269.1px;top:926.9px;overflow:visible" width="49.72" height="49.72" viewBox="0 0 44 44" fill="none"><g stroke="#1aa389" stroke-width="2.400" fill="none" stroke-linecap="round" stroke-linejoin="round"><path d="M28 5.500H14Q5.500 5.500 5.500 14V32Q5.500 40.500 14 40.500H30Q38.500 40.500 38.500 32V19"/><path d="M5.500 26H12.500Q14.500 26 15 28Q16 32 22 32Q28 32 29 28Q29.500 26 31.500 26H38.500V32Q38.500 40.500 30 40.500H14Q5.500 40.500 5.500 32Z" fill="#1aa389" fill-opacity=".2"/><path d="M15.500 13H27M18 20H25"/></g><circle cx="36" cy="6.500" r="5.500" fill="#1aa389"/></svg><span class="t" style="left:366.0px;top:937px;font-size:25.30px;line-height:28px;color:#072d69;transform:scaleX(1.0903);-webkit-text-stroke:0.40px #072d69;">Inbox performance</span>
<div class="b" style="left:221.0px;top:1032.3px;width:532.0px;height:127.0px;background:#fff;border:2px solid #ecf0fa;border-radius:11px"></div><div class="b" style="left:254.3px;top:1056.0px;width:79.5px;height:79.5px;background:#fde5e7;border-radius:15px"></div><svg class="b" style="left:270.7px;top:1072.5px;overflow:visible" width="46.64" height="46.64" viewBox="0 0 44 44" fill="none"><g stroke="#d93636" stroke-width="1.900" fill="none" stroke-linejoin="round" stroke-linecap="round"><path d="M1 42H43"/><path d="M5 42V30.500Q5 28.500 7 28.500Q9 28.500 9 30.500V42M14.500 42V24Q14.500 22 16.500 22Q18.500 22 18.500 24V42M24 42V29Q24 27 26 27Q28 27 28 29V42M33.500 42V29Q33.500 27 35.500 27Q37.500 27 37.500 29V42"/><path d="M8 13.500L15 7.500M19.500 8L25.500 13M29.500 14L35.500 12"/><circle cx="6" cy="15" r="2.300"/><circle cx="17.200" cy="6" r="2.300"/><circle cx="27.500" cy="14.500" r="2.300"/><circle cx="38" cy="11.500" r="2.300"/></g></svg><span class="t" style="left:366.0px;top:1081px;font-size:25.30px;line-height:28px;color:#072d69;transform:scaleX(1.1027);-webkit-text-stroke:0.40px #072d69;">Industry benchmark</span>
<div class="b" style="left:221.0px;top:1176.3px;width:532.0px;height:127.0px;background:#fff;border:2px solid #ecf0fa;border-radius:11px"></div><div class="b" style="left:254.3px;top:1200.0px;width:79.5px;height:79.5px;background:#f3e0fb;border-radius:15px"></div><svg class="b" style="left:272.0px;top:1217.8px;overflow:visible" width="44" height="44" viewBox="0 0 44 44" fill="none"><g stroke="#8a24c9" stroke-width="2.200" fill="none" stroke-linecap="round" stroke-linejoin="round"><path d="M22 39.500H12Q7.500 39.500 7.500 35V9Q7.500 4.500 12 4.500H31Q35.500 4.500 35.500 9V23"/><path d="M14 19.500V23M18.500 16V27M23 13V30M27.500 17V26M32 20V22.500" stroke-width="1.900"/><circle cx="33" cy="35" r="8"/><path d="M29.500 35L32 37.500L36.500 32.500"/></g></svg><span class="t" style="left:366.0px;top:1225px;font-size:25.30px;line-height:28px;color:#072d69;transform:scaleX(1.0792);-webkit-text-stroke:0.40px #072d69;">Listener performance</span>
<div class="b" style="left:221.0px;top:1320.3px;width:532.0px;height:127.0px;background:#fff;border:2px solid #ecf0fa;border-radius:11px"></div><div class="b" style="left:254.3px;top:1344.0px;width:79.5px;height:79.5px;background:#fff6c2;border-radius:15px"></div><svg class="b" style="left:272.0px;top:1361.8px;overflow:visible" width="44" height="44" viewBox="0 0 44 44" fill="none"><g stroke="#8a5a16" stroke-width="1.700" fill="none" stroke-linejoin="round"><path d="M28 47.500H2V-3.500H41V32"/><path d="M7 26V20H11.500V26ZM15 26V14H19.500V26ZM23 26V17.500H27.500V26ZM31 26V9.500H35.500V26Z"/><path d="M8 13L16.500 6L22.500 10.500L33 1M28 1H33V6"/><path d="M6 33.500H28M6 40.500H27"/><circle cx="37" cy="39.500" r="8.300"/></g><text x="37" y="44.300" font-size="13" font-weight="700" fill="#8a5a16" text-anchor="middle" font-family="Liberation Sans,sans-serif">$</text></svg><span class="t" style="left:366.0px;top:1369px;font-size:25.30px;line-height:28px;color:#072d69;transform:scaleX(1.0916);-webkit-text-stroke:0.40px #072d69;">Paid performance</span>
<div class="b" style="left:221.0px;top:1464.3px;width:532.0px;height:127.0px;background:#fff;border:2px solid #ecf0fa;border-radius:11px"></div><div class="b" style="left:254.3px;top:1488.0px;width:79.5px;height:79.5px;background:#fde8e0;border-radius:15px"></div>
<!-- mainp -->
<div class="b" style="left:820.5px;top:160.5px;width:2022.8px;height:1308.3px;background:#fff;border:1.300px solid #e8ecf7;border-radius:9px"></div>
<span class="t" style="left:845.0px;top:193px;font-size:24.50px;line-height:27px;color:#072d69;letter-spacing:0.33px;transform:scaleX(1.1300);">Profile performance report</span>
<svg class="b" style="left:1187.8px;top:192.8px;" width="28" height="28" viewBox="0 0 24 24" fill="none"><circle cx="12" cy="12" r="12" fill="#1474f5"/><path d="M13.300 24V15.300H16l.5-3.300h-3.200V9.900c0-1 .4-1.700 1.800-1.700h1.500V5.300c-.3 0-1.300-.2-2.400-.2-2.500 0-4.100 1.500-4.100 4.200V12H7.300v3.300h2.800V24Z" fill="#fff"/></svg>
<svg class="b" style="left:1221.5px;top:192.8px;" width="28" height="28" viewBox="0 0 24 24" fill="none"><defs><linearGradient id="igg2" x1="0.12" y1="0.1" x2="0.85" y2="0.95"><stop offset="0" stop-color="#8a3ccb"/><stop offset=".42" stop-color="#d4308a"/><stop offset=".72" stop-color="#f0583c"/><stop offset="1" stop-color="#fdbb4c"/></linearGradient></defs><circle cx="12" cy="12" r="12" fill="url(#igg2)"/><rect x="6" y="6" width="12" height="12" rx="3.600" stroke="#fff" stroke-width="1.500"/><circle cx="12" cy="12" r="2.900" stroke="#fff" stroke-width="1.500"/><circle cx="15.600" cy="8.400" r=".9" fill="#fff"/></svg>
<svg class="b" style="left:1255.1px;top:192.8px;" width="28" height="28" viewBox="0 0 24 24" fill="none"><circle cx="12" cy="12" r="12" fill="#0a78b5"/><text x="12" y="17" font-size="15" font-weight="700" fill="#fff" text-anchor="middle" font-family="Liberation Sans,sans-serif">in</text></svg>
<svg class="b" style="left:1288.8px;top:192.8px;" width="28" height="28" viewBox="0 0 24 24" fill="none"><circle cx="12" cy="12" r="12" fill="#000"/><path d="M6.500 6.500H9.300L17.500 17.500H14.700Z" stroke="#fff" stroke-width="1.100"/><path d="M17 6.500L7 17.500" stroke="#fff" stroke-width="1.100"/></svg>
<svg class="b" style="left:1322.4px;top:192.8px;" width="28" height="28" viewBox="0 0 24 24" fill="none"><circle cx="12" cy="12" r="12" fill="#ff0000"/><rect x="5" y="7.300" width="14" height="9.400" rx="2.800" fill="#fff"/><path d="M10.500 9.700V14.300L14.500 12Z" fill="#ff0000"/></svg>
<svg class="b" style="left:1356.0px;top:192.8px;" width="28" height="28" viewBox="0 0 24 24" fill="none"><defs><linearGradient id="asg2" x1="0" y1="0" x2="0" y2="1"><stop offset="0" stop-color="#1fb3f5"/><stop offset="1" stop-color="#1a74ec"/></linearGradient></defs><circle cx="12" cy="12" r="12" fill="url(#asg2)"/><path d="M12.500 6.300L7.600 15M11.500 6.300L17 16.800M5.500 14.800H18.500M7.600 15L6.600 17" stroke="#fff" stroke-width="1.900" stroke-linecap="round"/></svg>
<div class="b" style="left:1391.5px;top:185.5px;width:41.0px;height:41.0px;background:#f7f8fb;border-radius:50%"></div>
<span class="t" style="left:1401.5px;top:196px;font-size:17.50px;line-height:20px;color:#072d69;transform:scaleX(1.0525);">+8</span>
<span class="t" style="left:2639.5px;top:194px;font-size:20.50px;line-height:23px;color:#072d69;transform:scaleX(1.0717);">America/New York</span>
<div class="b" style="left:823.0px;top:251.5px;width:2017.5px;height:1.5px;background:#edf0f6"></div>
<span class="t" style="left:845.0px;top:285px;font-size:23.50px;line-height:26px;color:#072d69;transform:scaleX(1.0684);-webkit-text-stroke:0.40px #072d69;">Cross channel</span>
<svg class="b" style="left:1027.0px;top:293.0px;" width="16" height="12" viewBox="0 0 16 12" fill="none"><path d="M1.500 2.500L8 9L14.500 2.500" stroke="#0a2f6b" stroke-width="1.500" stroke-linecap="round" stroke-linejoin="round"/></svg>
<div class="b" style="left:1925.5px;top:269.5px;width:278.5px;height:55.0px;background:#fff;border:1.500px solid #e9ecf4;border-radius:9px"></div>
<span class="t" style="left:1937.5px;top:286px;font-size:17.50px;line-height:20px;color:#072d69;transform:scaleX(1.1103);">Default template</span>
<svg class="b" style="left:2169.0px;top:294.0px;" width="13" height="8" viewBox="0 0 13 8" fill="none"><path d="M0 0H13L6.500 7.500Z" fill="#868b99"/></svg>
<div class="b" style="left:2216.5px;top:269.5px;width:509.5px;height:55.0px;background:#fff;border:1.500px solid #e9ecf4;border-radius:9px"></div>
<span class="t" style="left:2230.0px;top:288px;font-size:17.00px;line-height:19px;color:#072d69;transform:scaleX(1.0626);">Jan 28, 2026 - Feb 25, 2026 vs Dec 30, 2025 - Jan 27, 2026</span>
<svg class="b" style="left:2749.0px;top:285.5px;" width="24" height="24" viewBox="0 0 24 24" fill="none"><g stroke="#868b99" stroke-width="2.500" fill="none" stroke-linecap="round" stroke-linejoin="round"><path d="M20.500 9.500A9 9 0 0 0 4.500 7.500L2.500 10M2.500 4V10H8.500"/><path d="M3.500 14.500A9 9 0 0 0 19.500 16.500L21.500 14M21.500 20V14H15.500"/></g></svg>
<svg class="b" style="left:2795.0px;top:286.0px;" width="24" height="24" viewBox="0 0 24 24" fill="none"><path d="M9 2H15V10H19.500L12 17.500L4.500 10H9Z" fill="#868b99"/><rect x="1.500" y="19.500" width="21" height="2.500" fill="#868b99"/></svg>
<div class="b" style="left:823.0px;top:336.5px;width:2017.5px;height:1.5px;background:#edf0f6"></div>
<div class="b" style="left:843.5px;top:348.5px;width:386.0px;height:111.0px;background:#fff;border-radius:5px;box-shadow:0 1px 12px rgba(50,70,130,.14)"></div><div class="b" style="left:853.5px;top:357.5px;width:26.5px;height:26.5px;background:#e4f5f9;border-radius:4px"></div><svg class="b" style="left:857.0px;top:361.0px;" width="19.5" height="19.5" viewBox="0 0 24 24" fill="none"><g stroke="#2bb0c9" stroke-width="1.5" fill="none" stroke-linecap="round" stroke-linejoin="round"><circle cx="9.500" cy="7.500" r="4"/><path d="M2 20V18.500Q2 14.500 6 14.500H13Q17 14.500 17 18.500V20Z"/><path d="M15.500 3.700Q19 4 19 7.500Q19 11 15.500 11.300M19.500 14.800Q22 15.500 22 18.500V20H20"/></g></svg><span class="t" style="left:892.3px;top:358px;font-size:22.00px;line-height:25px;color:#072d69;transform:scaleX(1.0942);-webkit-text-stroke:0.35px #072d69;">Followers</span><span class="t" style="left:853.0px;top:395px;font-size:22.50px;line-height:25px;color:#072d69;transform:scaleX(0.8813);">13.3k</span><svg class="b" style="left:856.5px;top:433.0px;" width="12.5" height="12.5" viewBox="0 0 12.5 12.5" fill="none"><path d="M2 10.500L10.500 2M4 2H10.500V8.500" stroke="#2bb673" stroke-width="1.250" stroke-linecap="round" stroke-linejoin="round"/></svg><span class="t" style="left:885.0px;top:427px;font-size:19.50px;line-height:22px;color:#072d69;transform:scaleX(0.9730);-webkit-text-stroke:0.40px #072d69;">+2%</span><span class="t" style="left:935.8px;top:427px;font-size:19.50px;line-height:22px;color:#1c1e26;transform:scaleX(1.0973);">vs Dec 30-Jan 27</span>
<div class="b" style="left:1240.8px;top:348.5px;width:386.0px;height:111.0px;background:#fff;border-radius:5px;box-shadow:0 1px 12px rgba(50,70,130,.14)"></div><div class="b" style="left:1250.8px;top:357.5px;width:26.5px;height:26.5px;background:#f3e6fb;border-radius:4px"></div><svg class="b" style="left:1254.3px;top:361.0px;" width="19.5" height="19.5" viewBox="0 0 24 24" fill="none"><g stroke="#8a3fd1" stroke-width="1.300" fill="none" stroke-linejoin="round"><path d="M6 3H14L18.500 7.500V21H6Z"/><path d="M14 3V7.500H18.500"/><path d="M10.500 11.500H15.500M10.500 14.500H15.500M10.500 17.500H15.500M8.500 11.500H9M8.500 14.500H9M8.500 17.500H9"/></g></svg><span class="t" style="left:1289.6px;top:358px;font-size:22.00px;line-height:25px;color:#072d69;transform:scaleX(1.0723);-webkit-text-stroke:0.35px #072d69;">Posts</span><span class="t" style="left:1250.3px;top:395px;font-size:22.50px;line-height:25px;color:#072d69;transform:scaleX(0.9191);">155</span><svg class="b" style="left:1253.8px;top:433.0px;" width="12.5" height="12.5" viewBox="0 0 12.5 12.5" fill="none"><path d="M2 10.500L10.500 2M4 2H10.500V8.500" stroke="#2bb673" stroke-width="1.250" stroke-linecap="round" stroke-linejoin="round"/></svg><span class="t" style="left:1282.3px;top:427px;font-size:19.50px;line-height:22px;color:#072d69;transform:scaleX(0.9856);-webkit-text-stroke:0.40px #072d69;">+9%</span><span class="t" style="left:1333.6px;top:427px;font-size:19.50px;line-height:22px;color:#1c1e26;transform:scaleX(1.0973);">vs Dec 30-Jan 27</span>
<div class="b" style="left:1638.1px;top:348.5px;width:386.0px;height:111.0px;background:#fff;border-radius:5px;box-shadow:0 1px 12px rgba(50,70,130,.14)"></div><div class="b" style="left:1648.1px;top:357.5px;width:26.5px;height:26.5px;background:#e9f7ea;border-radius:4px"></div><svg class="b" style="left:1651.6px;top:361.0px;" width="19.5" height="19.5" viewBox="0 0 24 24" fill="none"><g stroke="#3fae49" stroke-width="1.500" fill="none" stroke-linejoin="round"><path d="M3 10.500H7V20.500H3Z"/><path d="M7 11L11 4Q13.500 3.500 13.500 6.500L12.800 9.500H18.500Q20.500 9.500 20.300 11.500L19.300 18.500Q19 20.500 17 20.500H7"/></g></svg><span class="t" style="left:1686.9px;top:358px;font-size:22.00px;line-height:25px;color:#072d69;letter-spacing:0.40px;transform:scaleX(1.1300);-webkit-text-stroke:0.35px #072d69;">Engagement</span><span class="t" style="left:1647.6px;top:395px;font-size:22.50px;line-height:25px;color:#072d69;transform:scaleX(0.9642);">3.7k</span><svg class="b" style="left:1651.1px;top:433.0px;" width="12.5" height="12.5" viewBox="0 0 12.5 12.5" fill="none"><path d="M2 2L10.500 10.500M10.500 4V10.500H4" stroke="#d83a63" stroke-width="1.250" stroke-linecap="round" stroke-linejoin="round"/></svg><span class="t" style="left:1679.6px;top:427px;font-size:19.50px;line-height:22px;color:#072d69;transform:scaleX(1.0521);-webkit-text-stroke:0.40px #072d69;">-37.5%</span><span class="t" style="left:1756.9px;top:427px;font-size:19.50px;line-height:22px;color:#1c1e26;transform:scaleX(1.0973);">vs Dec 30-Jan 27</span>
<div class="b" style="left:2035.4px;top:348.5px;width:386.0px;height:111.0px;background:#fff;border-radius:5px;box-shadow:0 1px 12px rgba(50,70,130,.14)"></div><div class="b" style="left:2045.4px;top:357.5px;width:26.5px;height:26.5px;background:#f4eafc;border-radius:4px"></div><svg class="b" style="left:2048.9px;top:361.0px;" width="19.5" height="19.5" viewBox="0 0 24 24" fill="none"><g stroke="#7a3fd1" stroke-width="1.300" fill="none" stroke-linejoin="round" stroke-linecap="round"><path d="M8 9L15.500 5V18L8 14.500Z"/><path d="M8 9H5Q3 9 3 11.700Q3 14.500 5 14.500H8"/><path d="M5.500 14.500V19H8V14.500"/><path d="M18 8L20 7M18.500 11.500H21M18 15L20 16"/></g></svg><span class="t" style="left:2084.2px;top:358px;font-size:22.00px;line-height:25px;color:#072d69;letter-spacing:0.05px;transform:scaleX(1.1300);-webkit-text-stroke:0.35px #072d69;">Awareness</span><span class="t" style="left:2044.9px;top:395px;font-size:22.50px;line-height:25px;color:#072d69;transform:scaleX(1.0657);">280</span><svg class="b" style="left:2048.4px;top:433.0px;" width="12.5" height="12.5" viewBox="0 0 12.5 12.5" fill="none"><path d="M2 10.500L10.500 2M4 2H10.500V8.500" stroke="#2bb673" stroke-width="1.250" stroke-linecap="round" stroke-linejoin="round"/></svg><span class="t" style="left:2076.9px;top:427px;font-size:19.50px;line-height:22px;color:#072d69;transform:scaleX(0.9323);-webkit-text-stroke:0.40px #072d69;">+51%</span><span class="t" style="left:2136.2px;top:427px;font-size:19.50px;line-height:22px;color:#1c1e26;transform:scaleX(1.0973);">vs Dec 30-Jan 27</span>
<div class="b" style="left:2432.7px;top:348.5px;width:386.0px;height:111.0px;background:#fff;border-radius:5px;box-shadow:0 1px 12px rgba(50,70,130,.14)"></div><div class="b" style="left:2442.7px;top:357.5px;width:26.5px;height:26.5px;background:#fde8ee;border-radius:4px"></div><svg class="b" style="left:2446.2px;top:361.0px;" width="19.5" height="19.5" viewBox="0 0 24 24" fill="none"><g stroke="#d83a63" stroke-width="1.200" fill="none" stroke-linecap="round"><circle cx="6" cy="16" r="1.800"/><circle cx="16.500" cy="7" r="1.800"/><path d="M8 16H12Q15 16 13.500 13.500L10.500 10Q9.500 7.500 12 7.500H14.500"/><path d="M17 17.500H19.500M18.200 16.200V18.800M8 5H10"/></g></svg><span class="t" style="left:2481.5px;top:358px;font-size:22.00px;line-height:25px;color:#072d69;letter-spacing:0.26px;transform:scaleX(1.1300);-webkit-text-stroke:0.35px #072d69;">Impressions</span><span class="t" style="left:2442.2px;top:395px;font-size:22.50px;line-height:25px;color:#072d69;transform:scaleX(1.0476);">74k</span><svg class="b" style="left:2445.7px;top:433.0px;" width="12.5" height="12.5" viewBox="0 0 12.5 12.5" fill="none"><path d="M2 2L10.500 10.500M10.500 4V10.500H4" stroke="#d83a63" stroke-width="1.250" stroke-linecap="round" stroke-linejoin="round"/></svg><span class="t" style="left:2474.2px;top:427px;font-size:19.50px;line-height:22px;color:#072d69;transform:scaleX(1.0845);-webkit-text-stroke:0.40px #072d69;">-50.7%</span><span class="t" style="left:2553.5px;top:427px;font-size:19.50px;line-height:22px;color:#1c1e26;transform:scaleX(1.0973);">vs Dec 30-Jan 27</span>
<span class="t" style="left:889.5px;top:495px;font-size:31.00px;line-height:35px;color:#072d69;letter-spacing:0.13px;transform:scaleX(1.1300);-webkit-text-stroke:0.99px #072d69;">Audience growth</span>
<span class="t" style="left:889.5px;top:549px;font-size:20.50px;line-height:23px;color:#6b7385;transform:scaleX(1.0849);">Number of net followers gained during the selected period</span>
<span class="t" style="left:889.0px;top:1293px;font-size:20.00px;line-height:22px;color:#072d69;transform:scaleX(1.0723);">New followers</span>
<span class="t" style="left:1806.5px;top:1293px;font-size:20.00px;line-height:22px;color:#072d69;letter-spacing:-0.12px;transform:scaleX(0.8600);">212</span>
<div class="b" style="left:889.0px;top:1329.5px;width:946.0px;height:1.5px;background:#e9ecf3"></div>
<span class="t" style="left:889.0px;top:1346px;font-size:20.00px;line-height:22px;color:#072d69;letter-spacing:0.05px;transform:scaleX(1.1300);-webkit-text-stroke:0.64px #072d69;">Total followers</span>
<span class="t" style="left:1774.5px;top:1346px;font-size:20.00px;line-height:22px;color:#072d69;transform:scaleX(0.9888);-webkit-text-stroke:0.64px #072d69;">13,284</span>
<div class="b" style="left:2309.0px;top:1212.5px;width:44.0px;height:44.0px;background:#e4f5f9;border-radius:8px"></div>
<svg class="b" style="left:2317.0px;top:1220.0px;" width="28" height="28" viewBox="0 0 24 24" fill="none"><g stroke="#2bb0c9" stroke-width="1.4" fill="none" stroke-linecap="round" stroke-linejoin="round"><circle cx="9.500" cy="7.500" r="4"/><path d="M2 20V18.500Q2 14.500 6 14.500H13Q17 14.500 17 18.500V20Z"/><path d="M15.500 3.700Q19 4 19 7.500Q19 11 15.500 11.300M19.500 14.800Q22 15.500 22 18.500V20H20"/></g></svg>
<span class="t" style="left:2228.0px;top:1259px;font-size:20.00px;line-height:22px;color:#072d69;transform:scaleX(1.1159);-webkit-text-stroke:0.64px #072d69;">The total audience is</span>
<span class="t" style="left:2128.0px;top:1294px;font-size:52.00px;line-height:58px;color:#072d69;transform:scaleX(0.9778);font-weight:700;">13,284 Followers</span>
<span class="t" style="left:2258.0px;top:1363px;font-size:20.50px;line-height:23px;color:#072d69;transform:scaleX(1.1049);">change of</span>
<span class="t" style="left:2364.0px;top:1363px;font-size:20.50px;line-height:23px;color:#2eab5b;transform:scaleX(0.9615);-webkit-text-stroke:0.66px #2eab5b;">+2%</span>
<span class="t" style="left:2143.5px;top:1393px;font-size:20.50px;line-height:23px;color:#072d69;transform:scaleX(1.1298);">compared</span>
<span class="t" style="left:2253.5px;top:1394px;font-size:20.00px;line-height:22px;color:#072d69;transform:scaleX(1.0523);-webkit-text-stroke:0.64px #072d69;">Jan 28, 2026 - Feb 25, 2026</span>
<span class="t" style="left:2186.0px;top:1423px;font-size:20.50px;line-height:23px;color:#072d69;transform:scaleX(1.0235);">to</span>
<span class="t" style="left:2210.5px;top:1424px;font-size:20.00px;line-height:22px;color:#072d69;transform:scaleX(1.0517);-webkit-text-stroke:0.64px #072d69;">Dec 30, 2025 - Jan 27, 2026</span>
<!-- chart -->
<svg class="b" style="left:860px;top:600px;font-family:'DejaVu Sans',sans-serif" width="1970" height="560" viewBox="0 0 1970 560" fill="none"><path d="M117.5 34.0H1930.0" stroke="#e4e6ea" stroke-width="1.6"/><path d="M117.5 137.6H1930.0" stroke="#e4e6ea" stroke-width="1.6"/><path d="M117.5 241.2H1930.0" stroke="#e4e6ea" stroke-width="1.6"/><path d="M117.5 343.4H1930.0" stroke="#e4e6ea" stroke-width="1.6"/><path d="M117.5 445.6H1930.0" stroke="#ccd6eb" stroke-width="1.7"/><text x="96.5" y="42.0" text-anchor="end" font-size="15.3" letter-spacing="-.3" fill="#0a2f6b">13,300</text><text x="96.5" y="144.3" text-anchor="end" font-size="15.3" letter-spacing="-.3" fill="#0a2f6b">13,200</text><text x="96.5" y="246.7" text-anchor="end" font-size="15.3" letter-spacing="-.3" fill="#0a2f6b">13,100</text><text x="96.5" y="349.1" text-anchor="end" font-size="15.3" letter-spacing="-.3" fill="#0a2f6b">13,000</text><text x="96.5" y="451.6" text-anchor="end" font-size="15.3" letter-spacing="-.3" fill="#0a2f6b">12,900</text><path d="M135.3 445.6v12" stroke="#ccd6eb" stroke-width="1.4"/><text x="135.3" y="472.0" text-anchor="middle" font-size="15.3" letter-spacing="-.3" fill="#0a2f6b">30.</text><text x="135.3" y="490.5" text-anchor="middle" font-size="15.3" letter-spacing="-.3" fill="#0a2f6b">Dec</text><path d="M198.7 445.6v12" stroke="#ccd6eb" stroke-width="1.4"/><text x="198.7" y="472.0" text-anchor="middle" font-size="15.3" letter-spacing="-.3" fill="#0a2f6b">1. Jan</text><path d="M262.0 445.6v12" stroke="#ccd6eb" stroke-width="1.4"/><text x="262.0" y="472.0" text-anchor="middle" font-size="15.3" letter-spacing="-.3" fill="#0a2f6b">3. Jan</text><path d="M325.4 445.6v12" stroke="#ccd6eb" stroke-width="1.4"/><text x="325.4" y="472.0" text-anchor="middle" font-size="15.3" letter-spacing="-.3" fill="#0a2f6b">5. Jan</text><path d="M388.7 445.6v12" stroke="#ccd6eb" stroke-width="1.4"/><text x="388.7" y="472.0" text-anchor="middle" font-size="15.3" letter-spacing="-.3" fill="#0a2f6b">7. Jan</text><path d="M452.1 445.6v12" stroke="#ccd6eb" stroke-width="1.4"/><text x="452.1" y="472.0" text-anchor="middle" font-size="15.3" letter-spacing="-.3" fill="#0a2f6b">9. Jan</text><path d="M515.5 445.6v12" stroke="#ccd6eb" stroke-width="1.4"/><text x="515.5" y="472.0" text-anchor="middle" font-size="15.3" letter-spacing="-.3" fill="#0a2f6b">11. Jan</text><path d="M578.8 445.6v12" stroke="#ccd6eb" stroke-width="1.4"/><text x="578.8" y="472.0" text-anchor="middle" font-size="15.3" letter-spacing="-.3" fill="#0a2f6b">13. Jan</text><path d="M642.2 445.6v12" stroke="#ccd6eb" stroke-width="1.4"/><text x="642.2" y="472.0" text-anchor="middle" font-size="15.3" letter-spacing="-.3" fill="#0a2f6b">15. Jan</text><path d="M705.5 445.6v12" stroke="#ccd6eb" stroke-width="1.4"/><text x="705.5" y="472.0" text-anchor="middle" font-size="15.3" letter-spacing="-.3" fill="#0a2f6b">17. Jan</text><path d="M768.9 445.6v12" stroke="#ccd6eb" stroke-width="1.4"/><text x="768.9" y="472.0" text-anchor="middle" font-size="15.3" letter-spacing="-.3" fill="#0a2f6b">19. Jan</text><path d="M832.3 445.6v12" stroke="#ccd6eb" stroke-width="1.4"/><text x="832.3" y="472.0" text-anchor="middle" font-size="15.3" letter-spacing="-.3" fill="#0a2f6b">21. Jan</text><path d="M895.6 445.6v12" stroke="#ccd6eb" stroke-width="1.4"/><text x="895.6" y="472.0" text-anchor="middle" font-size="15.3" letter-spacing="-.3" fill="#0a2f6b">23. Jan</text><path d="M959.0 445.6v12" stroke="#ccd6eb" stroke-width="1.4"/><text x="959.0" y="472.0" text-anchor="middle" font-size="15.3" letter-spacing="-.3" fill="#0a2f6b">25. Jan</text><path d="M1022.3 445.6v12" stroke="#ccd6eb" stroke-width="1.4"/><text x="1022.3" y="472.0" text-anchor="middle" font-size="15.3" letter-spacing="-.3" fill="#0a2f6b">27. Jan</text><path d="M1054.1 445.6v12" stroke="#ccd6eb" stroke-width="1.4"/><text x="1054.1" y="472.0" text-anchor="middle" font-size="15.3" letter-spacing="-.3" fill="#0a2f6b">29. Jan</text><path d="M1117.6 445.6v12" stroke="#ccd6eb" stroke-width="1.4"/><text x="1117.6" y="472.0" text-anchor="middle" font-size="15.3" letter-spacing="-.3" fill="#0a2f6b">31. Jan</text><path d="M1181.0 445.6v12" stroke="#ccd6eb" stroke-width="1.4"/><text x="1181.0" y="472.0" text-anchor="middle" font-size="15.3" letter-spacing="-.3" fill="#0a2f6b">2. Feb</text><path d="M1244.5 445.6v12" stroke="#ccd6eb" stroke-width="1.4"/><text x="1244.5" y="472.0" text-anchor="middle" font-size="15.3" letter-spacing="-.3" fill="#0a2f6b">4. Feb</text><path d="M1308.0 445.6v12" stroke="#ccd6eb" stroke-width="1.4"/><text x="1308.0" y="472.0" text-anchor="middle" font-size="15.3" letter-spacing="-.3" fill="#0a2f6b">6. Feb</text><path d="M1371.4 445.6v12" stroke="#ccd6eb" stroke-width="1.4"/><text x="1371.4" y="472.0" text-anchor="middle" font-size="15.3" letter-spacing="-.3" fill="#0a2f6b">8. Feb</text><path d="M1434.9 445.6v12" stroke="#ccd6eb" stroke-width="1.4"/><text x="1434.9" y="472.0" text-anchor="middle" font-size="15.3" letter-spacing="-.3" fill="#0a2f6b">10.</text><text x="1434.9" y="490.5" text-anchor="middle" font-size="15.3" letter-spacing="-.3" fill="#0a2f6b">Feb</text><path d="M1498.4 445.6v12" stroke="#ccd6eb" stroke-width="1.4"/><text x="1498.4" y="472.0" text-anchor="middle" font-size="15.3" letter-spacing="-.3" fill="#0a2f6b">12.</text><text x="1498.4" y="490.5" text-anchor="middle" font-size="15.3" letter-spacing="-.3" fill="#0a2f6b">Feb</text><path d="M1561.9 445.6v12" stroke="#ccd6eb" stroke-width="1.4"/><text x="1561.9" y="472.0" text-anchor="middle" font-size="15.3" letter-spacing="-.3" fill="#0a2f6b">14.</text><text x="1561.9" y="490.5" text-anchor="middle" font-size="15.3" letter-spacing="-.3" fill="#0a2f6b">Feb</text><path d="M1625.3 445.6v12" stroke="#ccd6eb" stroke-width="1.4"/><text x="1625.3" y="472.0" text-anchor="middle" font-size="15.3" letter-spacing="-.3" fill="#0a2f6b">16.</text><text x="1625.3" y="490.5" text-anchor="middle" font-size="15.3" letter-spacing="-.3" fill="#0a2f6b">Feb</text><path d="M1688.8 445.6v12" stroke="#ccd6eb" stroke-width="1.4"/><text x="1688.8" y="472.0" text-anchor="middle" font-size="15.3" letter-spacing="-.3" fill="#0a2f6b">18.</text><text x="1688.8" y="490.5" text-anchor="middle" font-size="15.3" letter-spacing="-.3" fill="#0a2f6b">Feb</text><path d="M1752.3 445.6v12" stroke="#ccd6eb" stroke-width="1.4"/><text x="1752.3" y="472.0" text-anchor="middle" font-size="15.3" letter-spacing="-.3" fill="#0a2f6b">20.</text><text x="1752.3" y="490.5" text-anchor="middle" font-size="15.3" letter-spacing="-.3" fill="#0a2f6b">Feb</text><path d="M1815.7 445.6v12" stroke="#ccd6eb" stroke-width="1.4"/><text x="1815.7" y="472.0" text-anchor="middle" font-size="15.3" letter-spacing="-.3" fill="#0a2f6b">22.</text><text x="1815.7" y="490.5" text-anchor="middle" font-size="15.3" letter-spacing="-.3" fill="#0a2f6b">Feb</text><path d="M1879.2 445.6v12" stroke="#ccd6eb" stroke-width="1.4"/><text x="1879.2" y="472.0" text-anchor="middle" font-size="15.3" letter-spacing="-.3" fill="#0a2f6b">24.</text><text x="1879.2" y="490.5" text-anchor="middle" font-size="15.3" letter-spacing="-.3" fill="#0a2f6b">Feb</text><path d="M1022.3 34.0V446.0" stroke="#8a8a8a" stroke-width="1.600"/><path d="M135.3 363.9C137.0 365.0 142.1 368.6 145.5 370.5C148.9 372.5 152.1 374.5 155.6 375.6C159.2 376.7 163.0 376.9 166.8 377.1C170.6 377.4 174.7 377.2 178.5 377.1C182.3 377.0 185.9 376.8 189.7 376.6C193.4 376.4 197.1 376.0 200.9 376.1C204.6 376.2 208.3 376.8 212.0 377.1C215.8 377.5 219.5 378.0 223.2 378.1C226.9 378.3 230.7 378.2 234.4 378.1C238.1 378.0 241.8 377.9 245.6 377.6C249.3 377.4 253.0 376.9 256.7 376.6C260.5 376.4 264.2 376.2 267.9 376.1C271.7 376.0 275.4 376.2 279.1 376.1C282.8 376.0 286.6 375.8 290.3 375.6C294.0 375.3 297.7 375.0 301.5 374.6C305.2 374.1 308.9 373.8 312.6 373.0C316.4 372.3 320.2 371.5 323.8 370.0C327.5 368.5 331.4 365.9 334.5 363.9C337.5 361.9 339.3 359.8 342.1 357.8C344.9 355.8 347.9 352.8 351.3 351.7C354.6 350.6 358.6 351.1 362.4 351.2C366.3 351.3 370.3 352.0 374.1 352.2C377.9 352.5 381.6 352.7 385.3 352.7C389.0 352.7 392.8 352.6 396.5 352.2C400.2 351.9 403.9 351.2 407.7 350.7C411.4 350.2 415.1 349.5 418.8 349.2C422.6 348.8 426.3 348.8 430.0 348.7C433.7 348.5 437.5 348.4 441.2 348.2C444.9 347.9 448.7 347.4 452.4 347.1C456.1 346.9 459.8 346.9 463.6 346.6C467.3 346.4 471.0 345.9 474.7 345.6C478.5 345.4 482.2 345.0 485.9 345.1C489.6 345.2 493.4 345.8 497.1 346.1C500.8 346.5 504.5 346.9 508.3 347.1C512.0 347.4 515.7 347.6 519.5 347.6C523.2 347.6 526.9 347.4 530.6 347.1C534.4 346.9 538.1 346.6 541.8 346.1C545.5 345.6 549.5 345.7 553.0 344.1C556.5 342.5 559.4 338.5 562.6 336.5C565.9 334.4 568.8 332.8 572.3 331.9C575.8 331.0 579.7 331.0 583.5 330.9C587.2 330.7 590.9 330.9 594.7 330.9C598.4 330.9 602.1 330.9 605.8 330.9C609.6 330.9 613.3 330.9 617.0 330.9C620.7 330.9 624.5 330.8 628.2 330.9C631.9 331.0 635.6 331.6 639.4 331.4C643.1 331.2 647.1 331.0 650.5 329.9C654.0 328.8 657.0 326.4 660.2 324.8C663.4 323.2 666.4 321.1 669.9 320.2C673.3 319.4 677.3 319.4 681.0 319.7C684.8 320.0 688.5 321.4 692.2 322.2C695.9 323.1 699.7 324.4 703.4 324.8C707.1 325.1 710.8 324.9 714.6 324.3C718.3 323.7 722.0 322.1 725.8 321.2C729.5 320.4 733.2 319.8 736.9 319.2C740.7 318.6 744.4 318.0 748.1 317.7C751.8 317.3 755.6 317.2 759.3 317.2C763.0 317.1 766.7 317.2 770.5 317.2C774.2 317.1 777.9 316.9 781.6 316.6C785.4 316.4 789.1 316.2 792.8 315.6C796.6 315.0 800.3 314.2 804.0 313.1C807.7 312.0 811.7 310.4 815.2 309.0C818.7 307.7 821.6 306.3 824.8 305.0C828.1 303.6 831.0 302.3 834.5 300.9C838.0 299.5 842.2 297.7 845.7 296.3C849.1 295.0 852.1 294.0 855.3 292.8C858.5 291.5 861.6 290.2 865.0 288.7C868.4 287.2 872.2 285.3 875.7 283.6C879.1 281.9 882.3 279.9 885.8 278.5C889.3 277.2 892.8 276.1 896.5 275.5C900.1 274.9 903.9 275.1 907.7 275.0C911.4 274.8 915.1 274.7 918.8 274.5C922.6 274.2 926.3 273.7 930.0 273.5C933.7 273.2 937.5 273.1 941.2 272.9C944.9 272.8 948.7 272.7 952.4 272.4C956.1 272.2 959.8 271.9 963.6 271.4C967.3 270.9 971.0 270.2 974.7 269.4C978.5 268.5 982.4 266.9 985.9 266.3C989.5 265.8 992.0 266.0 996.0 266.2C1000.0 266.4 1005.7 267.2 1010.0 267.5C1014.3 267.8 1020.0 268.2 1022.0 268.3" stroke="#74a6dd" stroke-width="2.500" stroke-dasharray="2.500 8.450" fill="none"/><path d="M1023.0 268.7C1023.1 267.0 1022.0 261.2 1023.7 258.6C1025.4 256.0 1028.8 254.7 1033.0 253.2C1037.2 251.7 1040.5 251.7 1048.6 249.7C1056.7 247.8 1070.9 244.2 1081.6 241.5C1092.3 238.8 1101.7 235.9 1112.7 233.4C1123.7 230.9 1138.0 227.7 1147.7 226.4C1157.4 225.1 1163.2 226.3 1171.0 225.6C1178.8 225.0 1187.2 224.2 1194.3 222.5C1201.4 220.8 1204.7 218.3 1213.8 215.3C1222.9 212.3 1235.7 208.2 1248.7 204.6C1261.6 201.0 1276.3 197.5 1291.5 193.9C1306.7 190.3 1323.8 186.9 1340.0 183.2C1356.2 179.5 1374.1 175.2 1388.7 171.6C1403.3 168.1 1414.5 165.3 1427.5 161.9C1440.5 158.5 1456.7 154.5 1466.4 151.2C1476.1 148.0 1481.3 144.7 1485.8 142.4C1490.3 140.1 1488.5 139.9 1493.3 137.6C1498.1 135.3 1506.9 131.2 1514.7 128.8C1522.5 126.4 1532.2 124.5 1540.0 123.4C1547.8 122.3 1553.5 123.4 1561.3 122.0C1569.1 120.6 1579.1 116.1 1586.6 114.8C1594.0 113.4 1598.5 114.1 1606.0 113.9C1613.5 113.7 1623.5 115.2 1631.3 113.7C1639.1 112.2 1645.9 106.7 1652.7 105.1C1659.5 103.5 1665.0 104.2 1672.1 103.9C1679.2 103.6 1687.3 105.6 1695.4 103.2C1703.5 100.8 1713.6 92.6 1720.7 89.6C1727.8 86.6 1732.0 86.8 1738.2 85.3C1744.3 83.8 1751.1 82.9 1757.6 80.6C1764.1 78.3 1771.8 73.2 1777.0 71.5C1782.2 69.8 1782.2 70.4 1788.7 70.5C1795.2 70.6 1808.1 72.3 1815.9 72.1C1823.7 72.0 1828.8 70.8 1835.3 69.6C1841.8 68.4 1847.7 67.1 1854.8 65.1C1861.9 63.1 1871.0 59.5 1878.1 57.5C1885.2 55.5 1891.7 54.5 1897.5 53.4C1903.3 52.3 1910.2 51.2 1912.7 50.7" stroke="#74a8e0" stroke-width="2.700" stroke-linejoin="round" stroke-linecap="round" fill="none"/><path d="M930.0 530.0h23" stroke="#7cb5ec" stroke-width="3"/><circle cx="941.5" cy="530.0" r="5.500" fill="#7cb5ec"/><text x="960.0" y="536.0" text-anchor="start" font-size="15.7" letter-spacing="-.3" fill="#0a2f6b" font-weight="700">Followers</text></svg>
</body></html>
